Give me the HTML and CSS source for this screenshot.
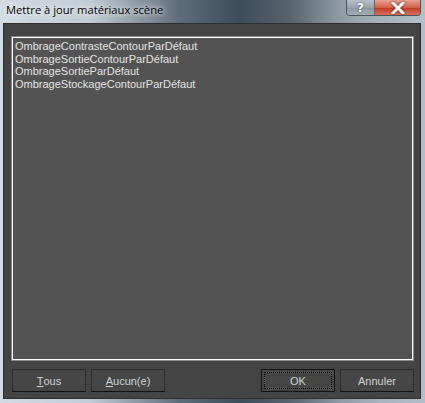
FILE: index.html
```html
<!DOCTYPE html>
<html>
<head>
<meta charset="utf-8">
<link rel="stylesheet" href="styles.css">
</head>
<body>
<div class="window">
  <div class="titlebar">
    <span class="title">Mettre à jour matériaux scène</span>
    <div class="caption-btns">
      <div class="cbtn help">?</div>
      <div class="cbtn close">
        <svg width="14" height="12" viewBox="0 0 14 12"><path d="M2 1 L12 11 M12 1 L2 11" stroke="#fff" stroke-width="3" stroke-linecap="square"/></svg>
      </div>
    </div>
  </div>
  <div class="client">
    <div class="list">
      <div class="item">OmbrageContrasteContourParDéfaut</div>
      <div class="item">OmbrageSortieContourParDéfaut</div>
      <div class="item">OmbrageSortieParDéfaut</div>
      <div class="item">OmbrageStockageContourParDéfaut</div>
    </div>
    <div class="buttons">
      <div class="group">
        <div class="btn"><span class="u">T</span>ous</div>
        <div class="btn"><span class="u">A</span>ucun(e)</div>
      </div>
      <div class="group">
        <div class="btn default"><span class="focus">OK</span></div>
        <div class="btn">Annuler</div>
      </div>
    </div>
  </div>
</div>
</body>
</html>
```
FILE: styles.css
```css
html, body {
  margin: 0;
  padding: 0;
  background: #aab5c1;
}
.window {
  width: 425px;
  height: 403px;
  box-sizing: border-box;
  padding: 0 4px 4px 3px;
  display: flex;
  flex-direction: column;
  background: linear-gradient(90deg, #d3dbe3 0px, #c2ccd6 90px, #5d6c7a 180px, #3e4d5b 240px, #56646f 290px, #8f9aa4 340px, #a9b3bd 380px, #b4bec8 425px);
}
.titlebar {
  height: 23px;
  flex: none;
  position: relative;
  display: flex;
  align-items: flex-start;
}
.title {
  font-family: "Open Sans", "Noto Sans", sans-serif;
  font-size: 11.2px;
  color: #000;
  margin-left: 3px;
  margin-top: 2px;
  text-shadow: 0 0 8px rgba(255,255,255,0.9), 0 0 4px rgba(255,255,255,0.8);
}
.caption-btns {
  position: absolute;
  top: 0;
  right: 0;
  display: flex;
  height: 15px;
  border: 1px solid #4a5560;
  border-top: none;
  border-radius: 0 0 4px 4px;
  overflow: hidden;
}
.cbtn {
  height: 15px;
  display: flex;
  align-items: center;
  justify-content: center;
}
.help {
  width: 27px;
  background: linear-gradient(#b7c0c8, #98a3ad 50%, #8a96a1 51%, #a3adb6);
  border-right: 1px solid #5a6570;
  color: #fff;
  font-family: "DejaVu Sans", sans-serif;
  font-weight: bold;
  font-size: 12px;
  text-shadow: 0 0 2px #333;
}
.close {
  width: 45px;
  background: linear-gradient(#e8a493, #d2614a 50%, #c2381f 51%, #d8705a);
}
.close svg {
  filter: drop-shadow(0 0 1px #5a1a10);
}
.client {
  flex: 1;
  background: #444444;
  border: 1px solid #2e2e2e;
  display: flex;
  flex-direction: column;
  padding: 12px 6px 5px 7px;
}
.list {
  height: 325px;
  box-sizing: border-box;
  border: 1px solid #8a8a8a;
  box-shadow: inset 0 0 0 1px #ffffff;
  background: #535353;
  padding: 3px 3px 3px 3px;
}
.item {
  font-family: "Liberation Sans", Arial, sans-serif;
  font-size: 11px;
  line-height: 12.7px;
  color: #e4e4e4;
  white-space: nowrap;
}
.buttons {
  margin-top: 8px;
  display: flex;
  justify-content: space-between;
  padding-left: 1px;
}
.group {
  display: flex;
  gap: 5px;
}
.btn {
  width: 74px;
  height: 23px;
  box-sizing: border-box;
  background: #464646;
  border: 1px solid #2f2f2f;
  border-bottom-color: #111;
  display: flex;
  align-items: center;
  justify-content: center;
  font-family: "Liberation Sans", Arial, sans-serif;
  font-size: 11px;
  color: #cfd3d6;
}
.u {
  text-decoration: underline;
}
.btn.default {
  border: 1px solid #151515;
  padding: 2px;
}
.focus {
  flex: 1;
  align-self: stretch;
  display: flex;
  align-items: center;
  justify-content: center;
  border: 1px dotted #000;
}
```
